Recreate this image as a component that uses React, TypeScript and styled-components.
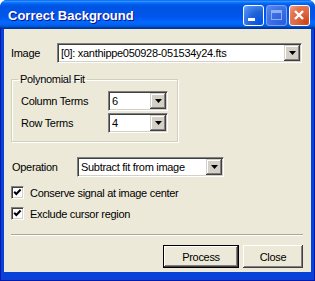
import styled, { createGlobalStyle } from "styled-components";

const GlobalStyle = createGlobalStyle`
  body {
    margin: 0;
    background: #fff;
  }
`;

const Window = styled.div`
  width: 315px;
  height: 281px;
  display: flex;
  flex-direction: column;
  background: #0842d8;
  border-radius: 7px 7px 0 0;
  overflow: hidden;
  font-family: "Liberation Sans", Arial, sans-serif;
  font-size: 11px;
  letter-spacing: -0.3px;
  color: #000;
`;

const TitleBar = styled.div`
  height: 29px;
  flex: none;
  display: flex;
  align-items: center;
  padding: 0 5px 0 8px;
  background: linear-gradient(
    to bottom,
    #0058ee 0%,
    #3593ff 4%,
    #288eff 6%,
    #127dff 8%,
    #036ffc 10%,
    #0262ee 14%,
    #0057e5 20%,
    #0054e3 24%,
    #0055eb 56%,
    #005bf5 66%,
    #026afe 76%,
    #0062ef 86%,
    #0052d6 92%,
    #0040ab 94%,
    #003092 100%
  );
`;

const TitleText = styled.span`
  color: #fff;
  font-weight: bold;
  font-size: 13px;
  letter-spacing: 0;
  text-shadow: 1px 1px #0f1089;
  margin-top: 1px;
`;

const CaptionButtons = styled.div`
  margin-left: auto;
  display: flex;
  gap: 2px;
  margin-top: 2px;
`;

const CaptionButton = styled.div<{ $kind: "min" | "max" | "close" }>`
  width: 21px;
  height: 21px;
  box-sizing: border-box;
  border-radius: 3px;
  display: flex;
  align-items: center;
  justify-content: center;
  border: 1px solid ${(p) => (p.$kind === "max" ? "#7fa2ee" : "#fff")};
  background: ${(p) =>
    p.$kind === "close"
      ? "radial-gradient(circle at 85% 85%, #cc4616 0%, #dc6541 40%, #e5744f 70%, #f0a58a 100%)"
      : p.$kind === "max"
      ? "radial-gradient(circle at 85% 85%, #2a5ee0 0%, #3b6ee8 55%, #5a8af0 100%)"
      : "radial-gradient(circle at 85% 85%, #0054e9 0%, #2263d5 45%, #4d8ff5 85%, #7ab0ff 100%)"};
  svg {
    display: block;
  }
`;

const Frame = styled.div`
  flex: 1;
  display: flex;
  padding: 0 4px 9px;
  box-shadow: inset 1px 0 #0019a8, inset -1px 0 #0019a8, inset 0 -1px #0019a8;
`;

const Client = styled.div`
  flex: 1;
  display: flex;
  flex-direction: column;
  background: #ece9d8;
  padding: 14px 8px 4px 7px;
`;

const FieldRow = styled.div<{ $top?: number; $indent?: number }>`
  display: flex;
  align-items: center;
  height: 20px;
  margin-top: ${(p) => p.$top ?? 0}px;
  padding-left: ${(p) => p.$indent ?? 0}px;
`;

const Label = styled.span<{ $w: number }>`
  width: ${(p) => p.$w}px;
  flex: none;
`;

const Combo = styled.div<{ $w?: number }>`
  display: flex;
  box-sizing: border-box;
  height: 20px;
  padding: 1px;
  ${(p) => (p.$w ? `width: ${p.$w}px; flex: none;` : "flex: 1; margin-right: 1px;")}
  background: #fff;
  border: 1px solid;
  border-color: #808080 #fff #fff #808080;
  box-shadow: inset 1px 1px #404040, inset -1px -1px #d4d0c8;
`;

const ComboValue = styled.span`
  flex: 1;
  padding-left: 2px;
  line-height: 16px;
  white-space: nowrap;
  overflow: hidden;
`;

const DropButton = styled.div`
  width: 16px;
  height: 16px;
  flex: none;
  display: flex;
  align-items: center;
  justify-content: center;
  background: #d4d0c8;
  box-shadow: inset -1px -1px #404040, inset 1px 1px #d4d0c8,
    inset -2px -2px #808080, inset 2px 2px #fff;
  svg {
    display: block;
  }
`;

const Group = styled.fieldset`
  width: 167px;
  box-sizing: border-box;
  margin: 10px 0 0;
  padding: 5px 0 8px;
  min-width: 0;
  border: 1px solid #d0d0bf;
  box-shadow: inset 1px 1px #fff, 1px 1px #fff;
  display: flex;
  flex-direction: column;
  gap: 2px;
`;

const Legend = styled.legend`
  margin-left: 6px;
  padding: 0 2px;
  line-height: 13px;
`;

const CheckRow = styled.label<{ $top: number }>`
  display: flex;
  align-items: center;
  height: 13px;
  margin-top: ${(p) => p.$top}px;
`;

const CheckBox = styled.span`
  width: 13px;
  height: 13px;
  box-sizing: border-box;
  flex: none;
  display: flex;
  align-items: center;
  justify-content: center;
  background: #fff;
  border: 1px solid;
  border-color: #808080 #fff #fff #808080;
  box-shadow: inset 1px 1px #404040, inset -1px -1px #d4d0c8;
  margin-right: 6px;
  svg {
    display: block;
  }
`;

const Separator = styled.div`
  height: 2px;
  margin-top: 14px;
  border-top: 1px solid #aca899;
  border-bottom: 1px solid #fff;
  box-sizing: border-box;
`;

const ButtonRow = styled.div`
  display: flex;
  justify-content: flex-end;
  gap: 4px;
  margin-top: 9px;
`;

const PushButton = styled.button<{ $w: number; $default?: boolean }>`
  width: ${(p) => p.$w}px;
  height: 23px;
  box-sizing: border-box;
  font: inherit;
  letter-spacing: inherit;
  color: #000;
  background: #ece9d8;
  padding: 0;
  border: ${(p) => (p.$default ? "1px solid #000" : "none")};
  box-shadow: inset -1px -1px #404040, inset 1px 1px #fff,
    inset -2px -2px #808080, inset 2px 2px #ece9d8;
`;

const Arrow = () => (
  <svg width="7" height="4" viewBox="0 0 7 4">
    <polygon points="0,0 7,0 3.5,4" fill="#000" />
  </svg>
);

const Tick = () => (
  <svg width="9" height="9" viewBox="0 0 9 9">
    <polyline
      points="1.2,3.8 3.3,5.9 7.6,1.6"
      fill="none"
      stroke="#000"
      strokeWidth="2.1"
    />
  </svg>
);

function ComboBox({ value, w }: { value: string; w?: number }) {
  return (
    <Combo $w={w}>
      <ComboValue>{value}</ComboValue>
      <DropButton>
        <Arrow />
      </DropButton>
    </Combo>
  );
}

export default function App() {
  return (
    <>
      <GlobalStyle />
      <Window>
        <TitleBar>
          <TitleText>Correct Background</TitleText>
          <CaptionButtons>
            <CaptionButton $kind="min">
              <svg width="19" height="19" viewBox="0 0 19 19">
                <rect x="4" y="12" width="7" height="3" fill="#fff" />
              </svg>
            </CaptionButton>
            <CaptionButton $kind="max">
              <svg width="19" height="19" viewBox="0 0 19 19">
                <rect x="4.5" y="4.5" width="10" height="9" fill="none" stroke="#8fb0ef" />
                <rect x="4" y="4" width="11" height="3" fill="#8fb0ef" />
              </svg>
            </CaptionButton>
            <CaptionButton $kind="close">
              <svg width="19" height="19" viewBox="0 0 19 19">
                <path d="M5 5 L13 13 M13 5 L5 13" stroke="#fff" strokeWidth="2.4" />
              </svg>
            </CaptionButton>
          </CaptionButtons>
        </TitleBar>
        <Frame>
          <Client>
            <FieldRow>
              <Label $w={46}>Image</Label>
              <ComboBox value="[0]: xanthippe050928-051534y24.fts" />
            </FieldRow>

            <Group>
              <Legend>Polynomial Fit</Legend>
              <FieldRow $indent={9}>
                <Label $w={87}>Column Terms</Label>
                <ComboBox value="6" w={60} />
              </FieldRow>
              <FieldRow $indent={9}>
                <Label $w={87}>Row Terms</Label>
                <ComboBox value="4" w={60} />
              </FieldRow>
            </Group>

            <FieldRow $top={15} $indent={1}>
              <Label $w={65}>Operation</Label>
              <ComboBox value="Subtract fit from image" w={147} />
            </FieldRow>

            <CheckRow $top={9}>
              <CheckBox>
                <Tick />
              </CheckBox>
              Conserve signal at image center
            </CheckRow>
            <CheckRow $top={8}>
              <CheckBox>
                <Tick />
              </CheckBox>
              Exclude cursor region
            </CheckRow>

            <Separator />

            <ButtonRow>
              <PushButton $w={76} $default>
                Process
              </PushButton>
              <PushButton $w={60}>Close</PushButton>
            </ButtonRow>
          </Client>
        </Frame>
      </Window>
    </>
  );
}
